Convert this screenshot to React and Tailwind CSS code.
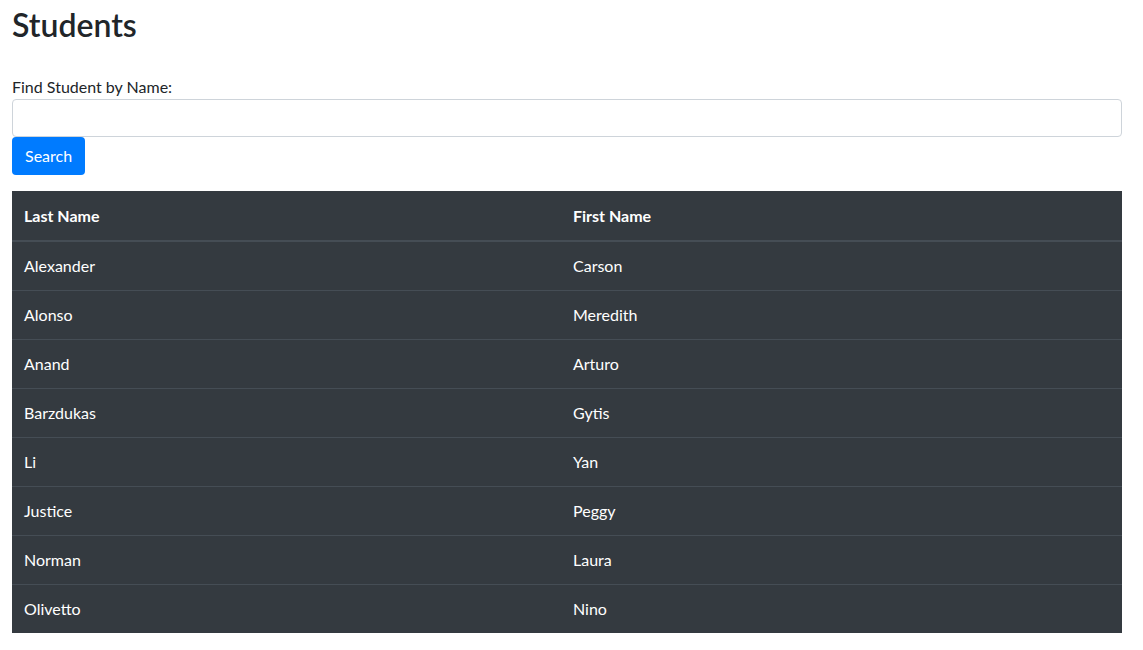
import React, { useState } from "react";

const students = [
  { last: "Alexander", first: "Carson" },
  { last: "Alonso", first: "Meredith" },
  { last: "Anand", first: "Arturo" },
  { last: "Barzdukas", first: "Gytis" },
  { last: "Li", first: "Yan" },
  { last: "Justice", first: "Peggy" },
  { last: "Norman", first: "Laura" },
  { last: "Olivetto", first: "Nino" },
];

export default function App() {
  const [query, setQuery] = useState("");

  return (
    <div className="min-h-screen bg-white font-['Segoe_UI','Lato','Liberation_Sans',sans-serif] text-[#212529]">
      <div className="px-3 w-[1134px]">
        {/* titre */}
        <h2 className="text-[32px] font-semibold leading-[38px] pt-[6px] mb-[31px]">Students</h2>

        {/* recherche */}
        <form onSubmit={(e) => e.preventDefault()}>
          <label className="block text-base leading-6">Find Student by Name:</label>
          <input
            type="text"
            value={query}
            onChange={(e) => setQuery(e.target.value)}
            className="block w-full h-[38px] px-3 border border-[#ced4da] rounded bg-white focus:outline-none"
          />
          <button
            type="submit"
            className="block h-[38px] px-[13px] bg-[#007bff] text-white text-base rounded"
          >
            Search
          </button>
        </form>

        {/* tableau */}
        <table className="w-full mt-4 bg-[#343a40] text-white text-base border-collapse">
          <thead>
            <tr className="border-b-2 border-[#454d55]">
              <th className="w-[549px] h-[50px] px-3 text-left font-bold">Last Name</th>
              <th className="px-3 text-left font-bold">First Name</th>
            </tr>
          </thead>
          <tbody>
            {students.map((s, i) => (
              <tr key={i} className={i > 0 ? "border-t border-[#454d55]" : ""}>
                <td className="h-[49px] px-3">{s.last}</td>
                <td className="px-3">{s.first}</td>
              </tr>
            ))}
          </tbody>
        </table>
      </div>
    </div>
  );
}
